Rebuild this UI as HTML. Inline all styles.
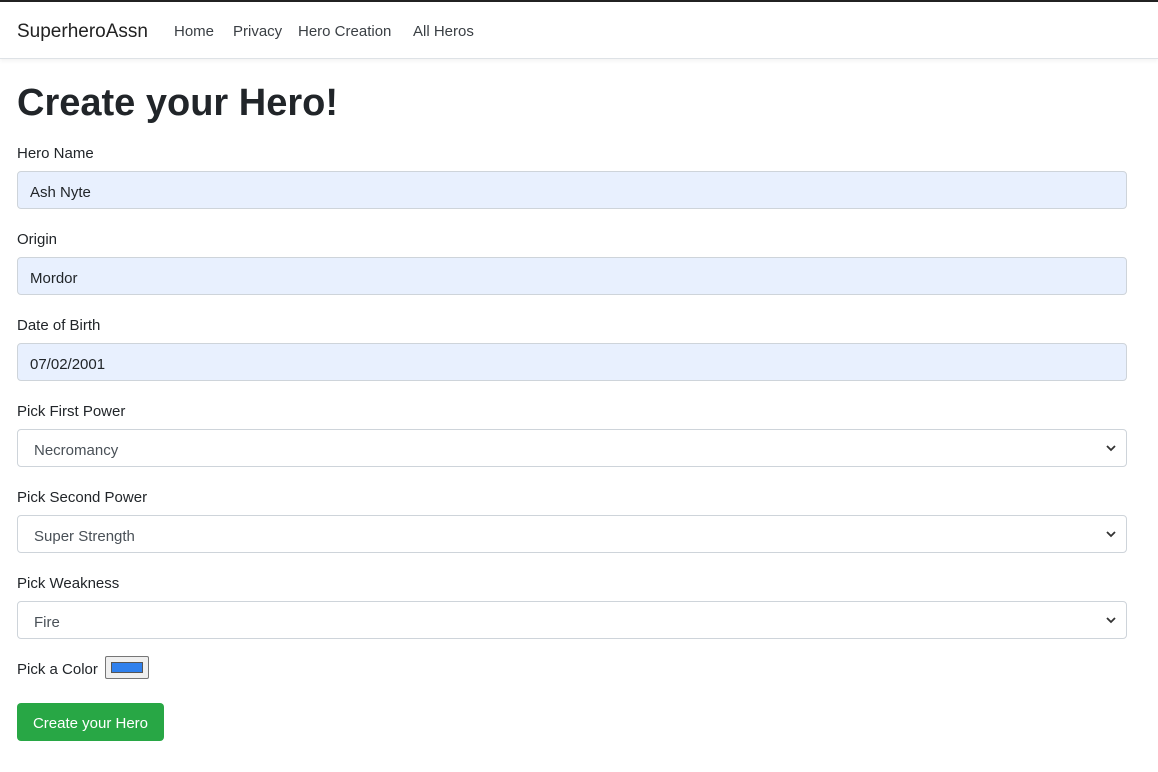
<!DOCTYPE html>
<html><head><style>
body{margin:0;width:1158px;height:772px;background:#fff;font-family:"Liberation Sans",sans-serif;color:#212529;position:relative;overflow:hidden}
.top{position:absolute;left:0;top:0;width:1158px;height:2px;background:#222}
.nav{position:absolute;left:0;top:2px;width:1158px;height:56px;border-bottom:1px solid #dee2e6;box-shadow:0 2px 4px rgba(0,0,0,.05)}
.a{position:absolute;top:21px;font-size:15px;color:#3a3f44;white-space:nowrap}
.brand{position:absolute;left:17px;top:19px;font-size:19px;color:#222}
h1{position:absolute;left:17px;top:79px;margin:0;font-size:38px;font-weight:bold;line-height:48px}
.l{position:absolute;left:17px;font-size:15px;white-space:nowrap}
.i{position:absolute;left:17px;width:1108px;height:36px;border:1px solid #ced4da;border-radius:4px;background:#e8f0fe;box-sizing:content-box;font-size:15px;line-height:42px;text-indent:12px}
.s{background:#fff;color:#495057;text-indent:16px}
.s svg{position:absolute;right:10px;top:14px}
.sw{position:absolute;left:105px;top:656px;width:42px;height:21px;border:1px solid #767676;border-radius:2px;background:#efefef}
.sw div{position:absolute;left:5px;top:5px;width:32px;height:11px;background:#2f80ed;border:1px solid #555;box-sizing:border-box}
.btn{position:absolute;left:17px;top:703px;width:147px;height:38px;background:#28a745;border-radius:4px;color:#fff;font-size:15px;line-height:42px;text-align:center}
</style></head><body>
<div class="top"></div>
<div class="nav">
<div class="brand">SuperheroAssn</div>
<div class="a" style="left:174px">Home</div>
<div class="a" style="left:233px">Privacy</div>
<div class="a" style="left:298px">Hero Creation</div>
<div class="a" style="left:413px">All Heros</div>
</div>
<h1>Create your Hero!</h1>
<div class="l" style="top:145px">Hero Name</div>
<div class="i" style="top:171px">Ash Nyte</div>
<div class="l" style="top:231px">Origin</div>
<div class="i" style="top:257px">Mordor</div>
<div class="l" style="top:317px">Date of Birth</div>
<div class="i" style="top:343px">07/02/2001</div>
<div class="l" style="top:403px">Pick First Power</div>
<div class="i s" style="top:429px">Necromancy<svg width="10" height="8" viewBox="0 0 10 8"><path d="M1 2l4 4 4-4" stroke="#333" stroke-width="1.8" fill="none"/></svg></div>
<div class="l" style="top:489px">Pick Second Power</div>
<div class="i s" style="top:515px">Super Strength<svg width="10" height="8" viewBox="0 0 10 8"><path d="M1 2l4 4 4-4" stroke="#333" stroke-width="1.8" fill="none"/></svg></div>
<div class="l" style="top:575px">Pick Weakness</div>
<div class="i s" style="top:601px">Fire<svg width="10" height="8" viewBox="0 0 10 8"><path d="M1 2l4 4 4-4" stroke="#333" stroke-width="1.8" fill="none"/></svg></div>
<div class="l" style="top:661px">Pick a Color</div>
<div class="sw"><div></div></div>
<div class="btn">Create your Hero</div>
</body></html>
